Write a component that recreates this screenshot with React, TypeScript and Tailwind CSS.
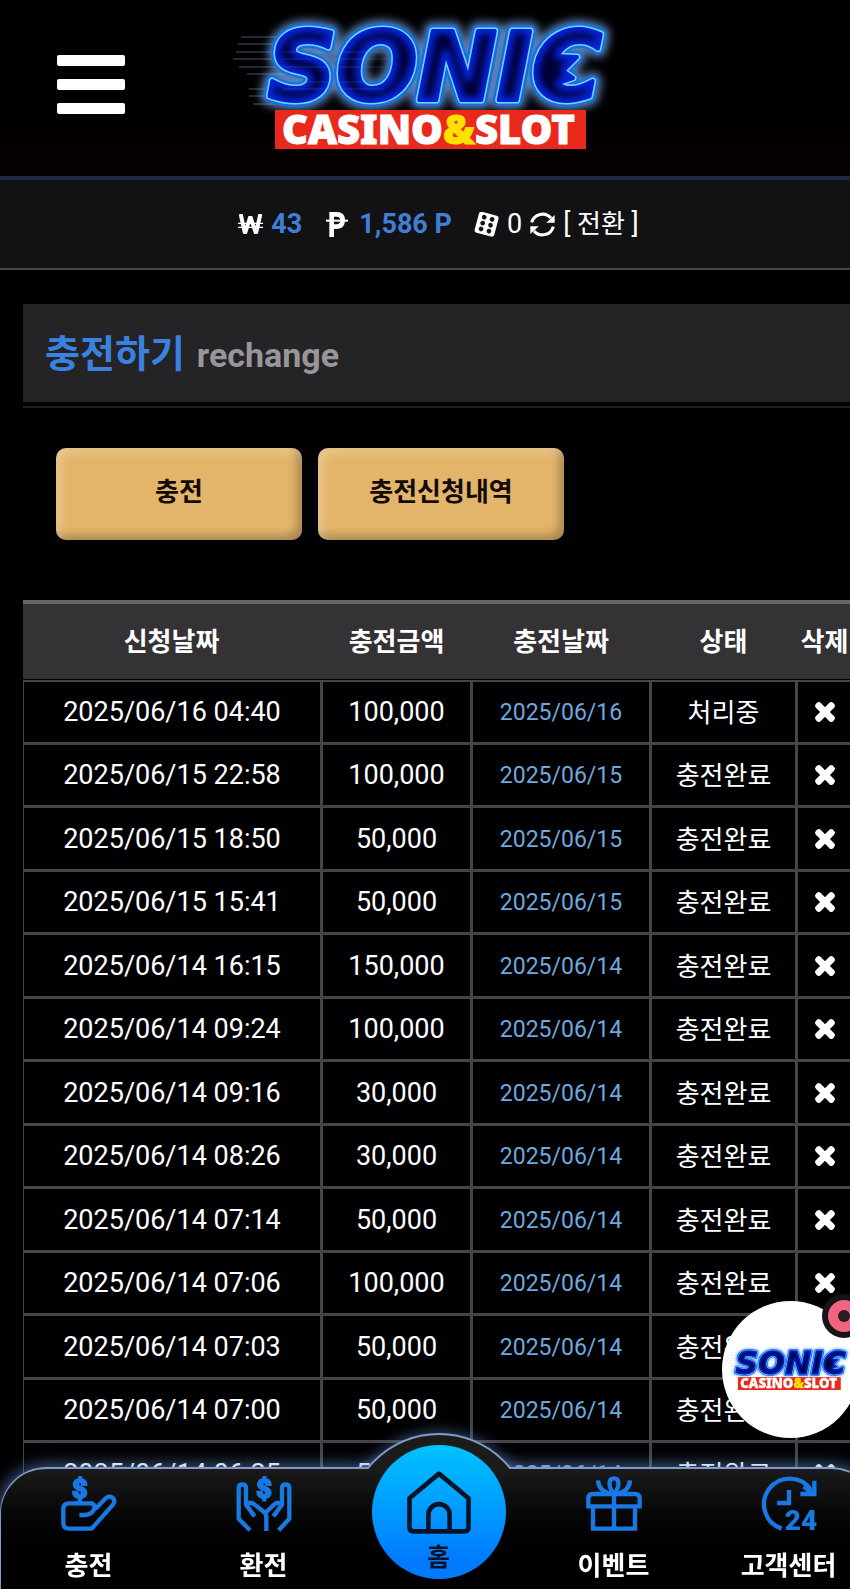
import { useId, type ReactNode } from "react";
import { FaTimes } from "react-icons/fa";

type Row = { applied: string; amount: string; charged: string; status: string };

const rows: Row[] = [
  { applied: "2025/06/16 04:40", amount: "100,000", charged: "2025/06/16", status: "처리중" },
  { applied: "2025/06/15 22:58", amount: "100,000", charged: "2025/06/15", status: "충전완료" },
  { applied: "2025/06/15 18:50", amount: "50,000", charged: "2025/06/15", status: "충전완료" },
  { applied: "2025/06/15 15:41", amount: "50,000", charged: "2025/06/15", status: "충전완료" },
  { applied: "2025/06/14 16:15", amount: "150,000", charged: "2025/06/14", status: "충전완료" },
  { applied: "2025/06/14 09:24", amount: "100,000", charged: "2025/06/14", status: "충전완료" },
  { applied: "2025/06/14 09:16", amount: "30,000", charged: "2025/06/14", status: "충전완료" },
  { applied: "2025/06/14 08:26", amount: "30,000", charged: "2025/06/14", status: "충전완료" },
  { applied: "2025/06/14 07:14", amount: "50,000", charged: "2025/06/14", status: "충전완료" },
  { applied: "2025/06/14 07:06", amount: "100,000", charged: "2025/06/14", status: "충전완료" },
  { applied: "2025/06/14 07:03", amount: "50,000", charged: "2025/06/14", status: "충전완료" },
  { applied: "2025/06/14 07:00", amount: "50,000", charged: "2025/06/14", status: "충전완료" },
  { applied: "2025/06/14 06:25", amount: "50,000", charged: "2025/06/14", status: "충전완료" },
];

function Logo({ className }: { className: string }) {
  const id = useId();
  const word = `${id}word`;
  const glow = `${id}glow`;
  const core = `${id}core`;
  return (
    <svg viewBox="0 0 390 130" className={`overflow-visible ${className}`} role="img" aria-label="SONIC CASINO&SLOT">
      <defs>
        <g id={word} strokeLinejoin="round">
          <text
            x="35"
            y="78"
            fontSize="95"
            fontWeight="700"
            fontStyle="italic"
            className="font-['DejaVu_Sans',sans-serif]"
          >
            SONIC
          </text>
          <path d="M318 34L344 35L330 49L340 56L322 62Z" />
        </g>
        <filter id={glow} x="-10%" y="-30%" width="120%" height="160%">
          <feGaussianBlur stdDeviation="4" />
        </filter>
        <filter id={core} x="-10%" y="-30%" width="120%" height="160%">
          <feMorphology operator="erode" radius="3" />
          <feGaussianBlur stdDeviation="3" />
        </filter>
      </defs>
      <g stroke="#8fa0c8" strokeWidth="1" opacity="0.5">
        <path d="M8 15H60M5 22H60M3 30H60M0 37H60M6 45H60M14 52H60M16 67H50M16 74H50M20 82H50" />
      </g>
      <use href={`#${word}`} stroke="#7fb4ff" strokeWidth="18" opacity="0.7" filter={`url(#${glow})`} />
      <use href={`#${word}`} stroke="#1271dc" strokeWidth="12" />
      <use href={`#${word}`} stroke="#7fd4ff" strokeWidth="7" />
      <use href={`#${word}`} fill="#0424d8" stroke="#0424d8" strokeWidth="4" />
      <use href={`#${word}`} fill="#00043a" filter={`url(#${core})`} />
      <g stroke="#5a8cff" strokeWidth="1" opacity="0.25">
        <path d="M50 30H150M50 37H160M50 45H150M50 60H140M50 67H150" />
      </g>
      <rect x="42" y="88" width="311" height="39" fill="#e8291c" />
      <text x="49" y="122" fontSize="40" fontWeight="900" fill="#fff" stroke="#fff" className="font-['Noto_Sans',sans-serif]">
        CASINO<tspan fill="#ffe000" stroke="#ffe000">&amp;</tspan>SLOT
      </text>
    </svg>
  );
}

function NavIcon({ children }: { children: ReactNode }) {
  return (
    <svg
      viewBox="0 0 168 168"
      className="size-14 text-[#1878e4]"
      fill="none"
      stroke="currentColor"
      strokeWidth="13"
      aria-hidden="true"
    >
      {children}
    </svg>
  );
}

function ChargeIcon() {
  return (
    <NavIcon>
      <text x="33" y="65" fontSize="80" fontWeight="900" fill="currentColor" strokeWidth="6" className="font-['Roboto',sans-serif]">
        $
      </text>
      <path d="M96 82H24Q7 82 7 99V141Q7 158 24 158H92L156 86Q164 74 155 65Q144 57 134 67L103 99" strokeLinejoin="round" />
      <path d="M55 117H72Q98 114 101 94Q101 84 90 82M56 70V82" />
    </NavIcon>
  );
}

function ExchangeIcon() {
  return (
    <NavIcon>
      <text x="61" y="65" fontSize="80" fontWeight="900" fill="currentColor" strokeWidth="6" className="font-['Roboto',sans-serif]">
        $
      </text>
      <path d="M42 163L8 128V36Q8 25 19 25T30 36V86L56 121" strokeLinejoin="round" />
      <path d="M34 84Q44 76 56 86L84 108Q91 114 91 124V165" />
      <path d="M128 163L160 128V36Q160 25 149 25T138 36V86L112 121" strokeLinejoin="round" />
      <path d="M134 84Q124 76 114 86L91 108" />
    </NavIcon>
  );
}

function EventIcon() {
  return (
    <NavIcon>
      <path d="M7 91V68Q7 54 21 54H147Q161 54 161 68V91Z" />
      <path d="M21 91V158H147V91M84 54V158" />
      <path d="M84 54C66 32 66 7 84 7S102 32 84 54Z" />
      <path d="M36 13Q38 46 76 54M132 13Q130 46 92 54" />
    </NavIcon>
  );
}

function SupportIcon() {
  return (
    <NavIcon>
      <path d="M62 158A77 77 0 1 1 150 42" />
      <path d="M160 14V54H118M128 32L156 54" />
      <path d="M84 42V81H48" />
      <text x="71" y="163" fontSize="84" fontWeight="900" fill="currentColor" stroke="none" className="font-['Roboto',sans-serif]">
        24
      </text>
    </NavIcon>
  );
}

function WonIcon() {
  return (
    <svg viewBox="0 0 75 63" className="h-[21px] w-[25px]" fill="none" stroke="#fff" role="img" aria-label="원">
      <path d="M8 0L21 58L37 8L54 58L67 0" strokeWidth="12" strokeLinejoin="bevel" />
      <path d="M0 28H75M0 40H75" strokeWidth="4" />
    </svg>
  );
}

function PointIcon() {
  return (
    <svg viewBox="0 0 66 75" className="h-[25px] w-[22px]" fill="none" stroke="#fff" role="img" aria-label="포인트">
      <path d="M17 75V7H32Q50 7 50 25T32 44H17" strokeWidth="14" />
      <path d="M0 26H66" strokeWidth="6" />
    </svg>
  );
}

function DiceIcon() {
  return (
    <svg viewBox="0 0 74 74" className="size-[25px]" aria-hidden="true">
      <g transform="rotate(15 37 37)">
        <rect x="7" y="4" width="60" height="64" rx="8" fill="#fff" />
        <g fill="#121114">
          <circle cx="25" cy="18" r="7" />
          <circle cx="49" cy="18" r="7" />
          <circle cx="25" cy="36" r="7" />
          <circle cx="49" cy="36" r="7" />
          <circle cx="25" cy="54" r="7" />
          <circle cx="49" cy="54" r="7" />
        </g>
      </g>
    </svg>
  );
}

function RefreshIcon() {
  return (
    <svg viewBox="0 0 74 74" className="size-[25px]" fill="none" stroke="#fff" strokeWidth="9" aria-hidden="true">
      <path d="M5 31A33 33 0 0 1 62 18M69 43A33 33 0 0 1 12 56" />
      <path d="M73 9V32H48ZM1 65V42H26Z" fill="#fff" stroke="none" />
    </svg>
  );
}

const navLink = "flex flex-1 flex-col items-center gap-[18px] pt-[7px] text-[26px] leading-8 font-bold text-white";
const goldButton =
  "h-[92px] w-[246px] rounded-[10px] bg-[#e3b56a] pb-[3px] text-[26px] font-bold text-[#140a08] shadow-[inset_5px_5px_8px_rgba(255,255,255,0.25),inset_-5px_-5px_8px_rgba(0,0,0,0.25)]";

export default function App() {
  return (
    <div className="min-h-screen overflow-hidden bg-[#010003] font-['Roboto','Noto_Sans_CJK_KR',sans-serif] text-white">
      <div className="-mr-[27px]">
        <header className="relative flex h-[180px] justify-center border-b-4 border-[#20264a] bg-linear-to-b from-black to-[#080001] pt-[22px]">
          <button type="button" aria-label="메뉴" className="absolute top-[55px] left-[57px] flex flex-col gap-[13px]">
            <span className="h-[11px] w-[68px] rounded-xs bg-white" />
            <span className="h-[11px] w-[68px] rounded-xs bg-white" />
            <span className="h-[11px] w-[68px] rounded-xs bg-white" />
          </button>
          <Logo className="mr-[22px] h-[130px] w-[390px]" />
        </header>

        <div className="flex h-[90px] items-center justify-center border-b-2 border-[#434245] bg-[#121114] text-[27px]">
          <span className="flex items-center gap-2">
            <WonIcon />
            <span className="font-bold text-[#3f7fd6]">43</span>
          </span>
          <span className="ml-6 flex items-center gap-[11px]">
            <PointIcon />
            <span className="font-bold text-[#3f7fd6]">1,586 P</span>
          </span>
          <span className="ml-[22px] flex items-center gap-2">
            <DiceIcon />0
          </span>
          <button type="button" className="ml-2 flex items-center gap-2">
            <RefreshIcon />
            <span>
              [ <span className="text-[26px]">전환</span> ]
            </span>
          </button>
        </div>

        <main className="px-[23px] pt-[34px]">
          <h1 className="flex h-[98px] items-baseline gap-3 bg-[#242326] px-[22px] pt-[22px] font-bold">
            <span className="text-[38px] leading-[56px] text-[#3b82e0]">충전하기</span>
            <span className="text-[34px] text-[#98969a]">rechange</span>
          </h1>
          <div className="mt-1 h-0.5 bg-[#1c1b1d]" />

          <div className="mt-10 flex gap-4 pl-[33px]">
            <button type="button" className={goldButton}>충전</button>
            <button type="button" className={goldButton}>충전신청내역</button>
          </div>

          <table className="mt-[60px] w-full table-fixed border-separate border-spacing-0 text-center">
            <colgroup>
              <col className="w-[300px]" />
              <col className="w-[150px]" />
              <col className="w-[179px]" />
              <col className="w-[146px]" />
              <col />
            </colgroup>
            <thead>
              <tr className="h-20 text-[26px] [&>th]:border-t-4 [&>th]:border-b [&>th]:border-t-[#656367] [&>th]:border-b-black [&>th]:bg-[#343235] [&>th]:pt-0.5 [&>th]:pr-[3px]">
                <th>신청날짜</th>
                <th>충전금액</th>
                <th>충전날짜</th>
                <th>상태</th>
                <th>삭제</th>
              </tr>
            </thead>
            <tbody>
              {rows.map((row) => (
                <tr
                  key={row.applied}
                  className="h-16 even:h-[63px] first:h-[65px] first:[&>td]:border-t-2 [&>td]:border-r-3 [&>td]:border-b-3 [&>td]:border-[#454447] [&>td:first-child]:border-l"
                >
                  <td className="text-[27px] leading-8">{row.applied}</td>
                  <td className="text-[27px] leading-8">{row.amount}</td>
                  <td className="pt-0.5 text-[23px] leading-8 text-[#6fa8dc]">{row.charged}</td>
                  <td className="pt-0.5 text-[26px] leading-8">{row.status}</td>
                  <td>
                    <button type="button" aria-label={`${row.applied} 삭제`} className="block w-full">
                      <FaTimes className="mx-auto size-[26px] stroke-white stroke-[40px]" />
                    </button>
                  </td>
                </tr>
              ))}
            </tbody>
          </table>
        </main>
      </div>

      <a
        href="#chat"
        className="fixed -right-[9px] bottom-[151px] flex size-[137px] items-center justify-center rounded-full bg-white"
      >
        <Logo className="mr-1 w-[129px] shrink-0" />
        <span className="absolute -top-[7px] -right-[7px] flex size-11 items-center justify-center rounded-full border-[6px] border-[#161416] bg-[#f2637f]">
          <span className="size-3 rounded-full bg-[#2a1c22]" />
        </span>
      </a>

      <nav className="fixed -right-[27px] bottom-0 left-0">
        <div className="flex h-[122px] rounded-t-[46px] border border-t-2 border-b-0 border-[#7f9cc8] bg-linear-to-b from-[#1b1b1c] to-black to-90% shadow-[0_0_16px_2px_rgba(110,150,220,0.6)]">
          <a href="#charge" className={navLink}>
            <ChargeIcon />
            충전
          </a>
          <a href="#exchange" className={navLink}>
            <ExchangeIcon />
            환전
          </a>
          <span className="flex-1" />
          <a href="#event" className={navLink}>
            <EventIcon />
            이벤트
          </a>
          <a href="#support" className={navLink}>
            <SupportIcon />
            고객센터
          </a>
        </div>
        <div className="absolute inset-x-0 -top-[54px] mx-auto h-14 w-60 overflow-hidden">
          <div className="mx-auto mt-5 size-[184px] rounded-full border-2 border-[#7f9cc8] bg-[#1b1b1c] shadow-[0_0_14px_1px_rgba(110,150,220,0.5)]" />
        </div>
        <a
          href="#home"
          className="absolute inset-x-0 bottom-[10px] mx-auto flex size-[134px] flex-col items-center rounded-full bg-linear-to-b from-[#00c2ff] to-[#007bff] to-85% pt-[26px] text-[25px] leading-8 font-bold text-[#0a1226]"
        >
          <svg viewBox="0 0 192 190" className="h-[63px] w-16" fill="none" stroke="currentColor" strokeWidth="14" strokeLinejoin="round" aria-hidden="true">
            <path d="M96 8L185 82V170Q185 182 173 182H19Q7 182 7 170V82Z" />
            <path d="M64 182V132a32 32 0 0 1 64 0V182" />
          </svg>
          <span className="mt-2">홈</span>
        </a>
      </nav>
    </div>
  );
}
